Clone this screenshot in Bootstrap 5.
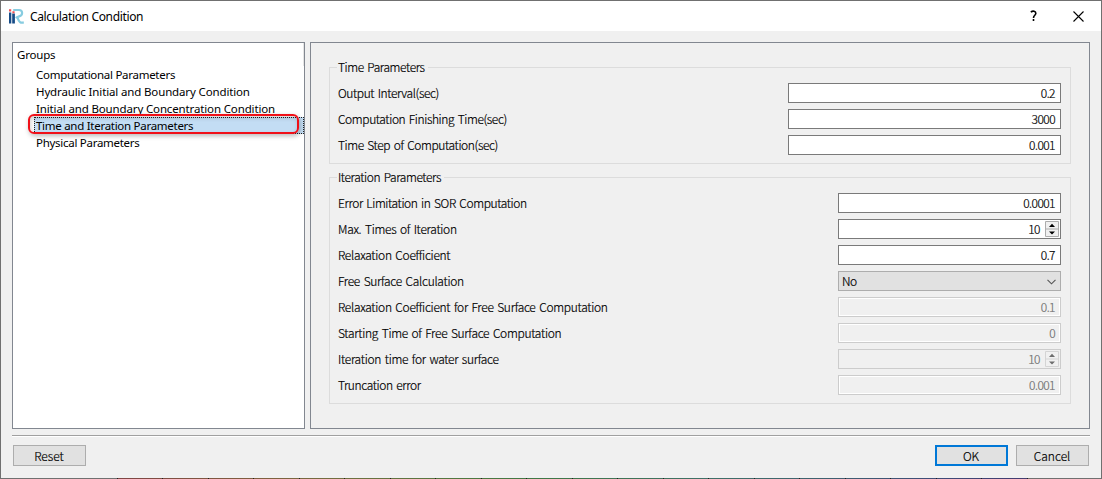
<!DOCTYPE html>
<html lang="en">
<head>
<meta charset="utf-8">
<meta name="viewport" content="width=device-width, initial-scale=1">
<title>Calculation Condition</title>
<link rel="stylesheet" href="https://cdn.jsdelivr.net/npm/bootstrap@5.3.0/dist/css/bootstrap.min.css">
<style>
  html, body { height: 100%; margin: 0; overflow: hidden; }
  body { background: #f0f0f0; color: #000; font: 300 12px/17px "Noto Sans CJK JP", "Noto Sans", sans-serif; }
  .dialog { width: 1102px; height: 479px; border: 1px solid #707070; border-bottom: 0; background: #f0f0f0; }
  .titlebar { height: 30px; padding-left: 7px; background: #fff; font-family: "Noto Sans", sans-serif; font-weight: 400; }
  .titlebar .caption { width: 115px; margin-left: 6px; letter-spacing: -.35px; font-size: 12px; }
  .caption-btn { width: 45px; height: 30px; padding: 0; border: 0; border-radius: 0; line-height: 0; }
  .panes { gap: 5px; margin: 11px 11px 0; height: 387px; }
  .tree { width: 293px; border: 1px solid #828790; background: #fff; font-family: "Noto Sans", sans-serif; font-weight: 400; font-size: 11.5px; padding-top: 3px; }
  .tree-title { padding-left: 4px; height: 20px; line-height: 17px; letter-spacing: -.2px; }
  .tree .list-group-item { height: 17px; padding: 0 0 0 2px; margin-left: 21px; border: 0; border-radius: 0; line-height: 18px; font-size: 11.5px; color: #000; background: transparent; white-space: nowrap; }
  .tree .list-group-item.selected { background: #c3ddf4; outline: 1px dotted #222; outline-offset: -1px; }
  .tree .callout { position: absolute; left: -6px; top: -3px; width: 271px; height: 20px; border: 2px solid #f01018; border-radius: 6px; box-shadow: 1px 2px 5px rgba(0,0,0,.28), inset 1px 2px 4px rgba(0,0,0,.18); }
  .header-edge { position: absolute; right: 0; top: 0; width: 1px; height: 23px; background: #e5e5e5; }
  .track-a { letter-spacing: -.28px; }
  .track-b { letter-spacing: -.14px; }
  .settings { width: 780px; border: 1px solid #828790; padding: 24px 18px 0; letter-spacing: -.4px; word-spacing: 1.3px; }
  .settings, .actions .btn { -webkit-text-stroke: .2px; }
  .group { position: relative; border: 1px solid #dcdcdc; padding: 15px 9px 0 8px; gap: 6px; }
  .group-time { height: 97px; }
  .group-iter { height: 227px; margin-top: 13px; }
  .group .legend-text { position: absolute; left: 7px; top: -10px; padding: 0 3px 0 1px; line-height: 17px; background: #f0f0f0; white-space: nowrap; }
  .field-row { height: 20px; line-height: 19px; }
  .field-row label { white-space: nowrap; }
  .loose { letter-spacing: -.3px; }
  .field { width: 223px; height: 20px; padding: 0 5px 0 3px; border: 1px solid #7a7a7a; border-radius: 0; background: #fff; color: #000; font-size: 12px; font-weight: 300; line-height: 17px; text-align: right; }
  .group-time .field { width: 273px; }
  .num { letter-spacing: -.55px; }
  .field.off { border-color: #ccc; background: #f0f0f0; box-shadow: inset 0 0 0 1px #fff; color: #707070; }
  .field.spin { padding-right: 1px; gap: 5px; }
  .field.spin svg { margin-top: 1px; }
  .field.spin.off { box-shadow: none; }
  .field.pick { background: #e1e1e1; border-color: #adadad; }
  .field.pick svg { margin-top: 7px; margin-right: -1px; }
  .rule { height: 2px; margin: 6px 11px 0; background: linear-gradient(#a0a0a0 50%, #fff 50%); }
  .actions { margin: 8px 12px 0; gap: 8px; height: 21px; }
  .actions .btn { width: 73px; height: 21px; padding: 0 1px 0 0; border: 1px solid #adadad; border-radius: 0; background: #e1e1e1; color: #000; font-size: 12px; font-weight: 300; line-height: 17px; }
  .actions .btn.main { border: 2px solid #0078d7; line-height: 15px; }
  .backdrop { height: 1px; margin: 12px -1px 0; padding-left: 117px; background: #707070; }
  .backdrop div { width: 911px; height: 1px; background: repeating-linear-gradient(90deg, #222 0 1px, transparent 1px 45.5px), linear-gradient(90deg, #804545, #806040 16%, #707040 25%, #507840 38%, #407845 46%, #407068 65%, #406070 78%, #404c78 90%, #443c70); }
</style>
</head>
<body>
<main class="dialog d-flex flex-column">
  <header class="titlebar d-flex align-items-center">
    <svg width="16" height="17" viewBox="0 0 16 17">
      <path d="M5.2 2H11C15 2 15.2 7.2 11.2 8.4C9.5 8.9 8.6 9.2 7.8 10M9.3 9.2C11 14.3 12.5 15.2 15.8 14.4" fill="none" stroke="#87cce0" stroke-width="2.2"/>
      <path d="M1 4.5H3.3V15.5H1ZM4.2 5.4H6.9V15.5H4.2Z" fill="#174c87"/>
      <path d="M1 1.3H3.2V3.5H1ZM4.4 3.2H6.6V5.2H4.4Z" fill="#ef4d50"/>
    </svg>
    <span class="caption text-nowrap">Calculation Condition</span>
    <button class="btn caption-btn ms-auto" aria-label="Help"><svg width="9" height="12" viewBox="0 0 9 12"><path d="M1.8 2.1C3.8.5 7 .9 6.8 3.5C6.7 5.3 4.5 5.3 4.5 8M4.5 9.1V10.9" fill="none" stroke="#000" stroke-width="1.6"/></svg></button>
    <button class="btn caption-btn" aria-label="Close"><svg width="11" height="11" viewBox="0 0 11 11"><path d="M.5.5L10.5 10.5M10.5.5L.5 10.5" stroke="#000" stroke-width="1.1"/></svg></button>
  </header>

  <div class="panes d-flex">
    <nav class="tree position-relative">
      <span class="header-edge"></span>
      <div class="tree-title">Groups</div>
      <div class="list-group">
        <div class="list-group-item track-a">Computational Parameters</div>
        <div class="list-group-item track-b">Hydraulic Initial and Boundary Condition</div>
        <div class="list-group-item track-b">Initial and Boundary Concentration Condition</div>
        <div class="list-group-item track-a selected position-relative">Time and Iteration Parameters<span class="callout"></span></div>
        <div class="list-group-item track-a">Physical Parameters</div>
      </div>
    </nav>

    <section class="settings">
      <div class="group group-time d-flex flex-column">
        <span class="legend-text">Time Parameters</span>
        <div class="field-row d-flex justify-content-between"><label>Output Interval(sec)</label><output class="field form-control num">0.2</output></div>
        <div class="field-row d-flex justify-content-between"><label>Computation Finishing Time(sec)</label><output class="field form-control num">3000</output></div>
        <div class="field-row d-flex justify-content-between"><label>Time Step of Computation(sec)</label><output class="field form-control num">0.001</output></div>
      </div>
      <div class="group group-iter d-flex flex-column">
        <span class="legend-text">Iteration Parameters</span>
        <div class="field-row d-flex justify-content-between"><label>Error Limitation in SOR Computation</label><output class="field form-control num">0.0001</output></div>
        <div class="field-row d-flex justify-content-between"><label class="loose">Max. Times of Iteration</label>
          <div class="field form-control spin d-flex justify-content-end align-items-start"><span class="num">10</span>
            <svg width="14" height="16" viewBox="0 0 14 16"><path d="M.5.5H13.5V15.5H.5ZM.5 8H13.5" fill="#f0f0f0" stroke="#acacac"/><path d="M4 6L7 2.8L10 6ZM4 10.4H10L7 13.4Z" fill="#000"/></svg></div></div>
        <div class="field-row d-flex justify-content-between"><label class="loose">Relaxation Coefficient</label><output class="field form-control num">0.7</output></div>
        <div class="field-row d-flex justify-content-between"><label class="loose">Free Surface Calculation</label>
          <div class="field form-control pick d-flex justify-content-between align-items-start"><span>No</span>
            <svg width="9" height="6" viewBox="0 0 9 6"><path d="M.5.8L4.5 4.8L8.5.8" fill="none" stroke="#555" stroke-width="1.1"/></svg></div></div>
        <div class="field-row d-flex justify-content-between"><label class="loose">Relaxation Coefficient for Free Surface Computation</label><output class="field form-control off num">0.1</output></div>
        <div class="field-row d-flex justify-content-between"><label class="loose">Starting Time of Free Surface Computation</label><output class="field form-control off num">0</output></div>
        <div class="field-row d-flex justify-content-between"><label class="loose">Iteration time for water surface</label>
          <div class="field form-control spin off d-flex justify-content-end align-items-start"><span class="num">10</span>
            <svg width="14" height="16" viewBox="0 0 14 16"><path d="M.5.5H13.5V15.5H.5ZM.5 8H13.5" fill="#f0f0f0" stroke="#d4d4d4"/><path d="M4 6L7 2.8L10 6ZM4 10.4H10L7 13.4Z" fill="#6d6d6d"/></svg></div></div>
        <div class="field-row d-flex justify-content-between"><label>Truncation error</label><output class="field form-control off num">0.001</output></div>
      </div>
    </section>
  </div>

  <div class="rule"></div>
  <footer class="actions d-flex">
    <button class="btn me-auto">Reset</button>
    <button class="btn main">OK</button>
    <button class="btn">Cancel</button>
  </footer>
  <div class="backdrop"><div></div></div>
</main>
<script src="https://cdn.jsdelivr.net/npm/bootstrap@5.3.0/dist/js/bootstrap.bundle.min.js"></script>
</body>
</html>
